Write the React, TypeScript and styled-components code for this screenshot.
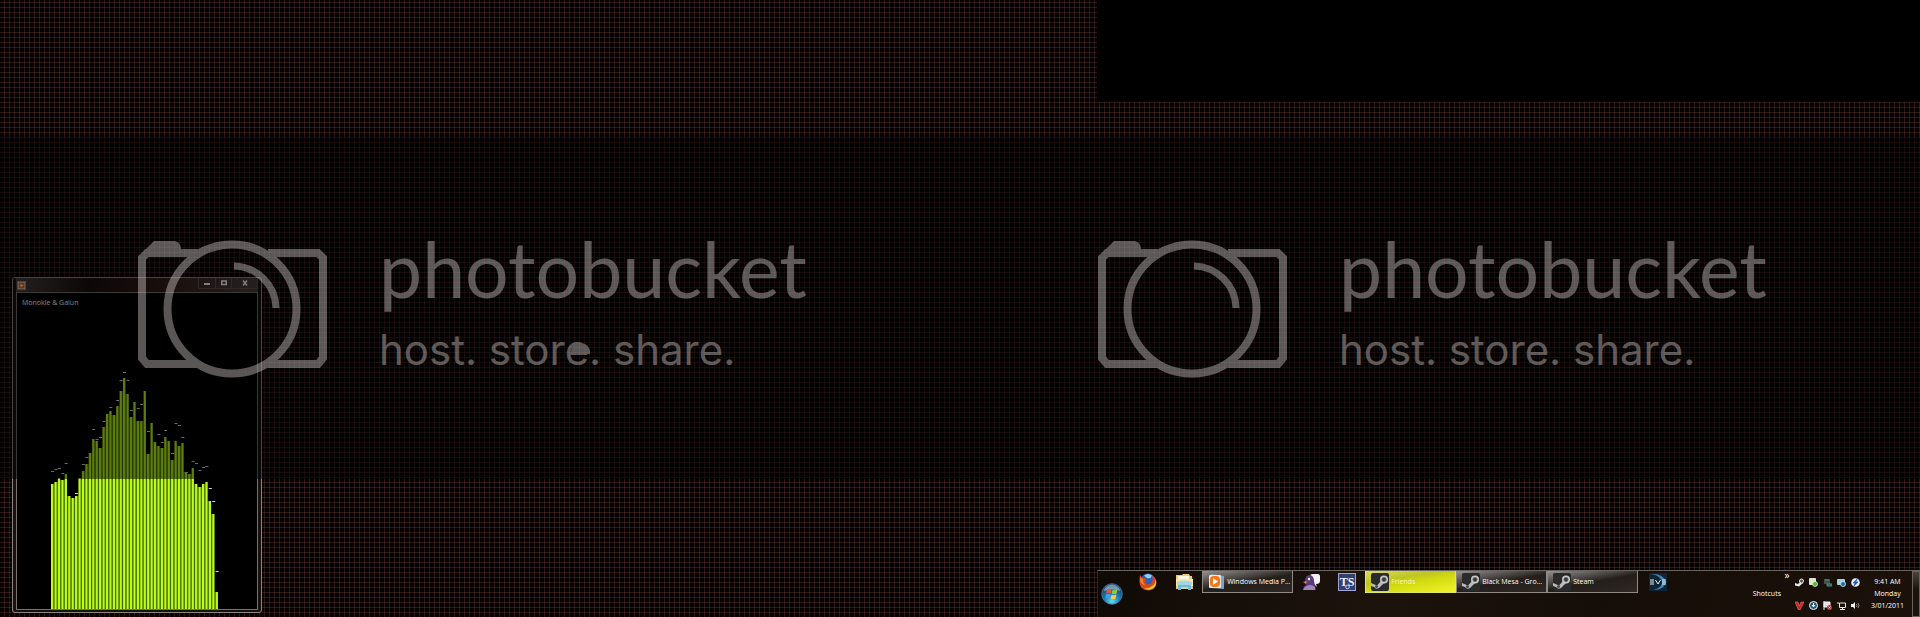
import React from 'react';
import styled, { createGlobalStyle, css } from 'styled-components';

const GlobalStyle = createGlobalStyle`
  * { box-sizing: border-box; }
  body { margin: 0; background: #050202; }
  button { font: inherit; color: inherit; background: none; border: 0; padding: 0; margin: 0; }
  svg { display: block; flex: none; }
`;

const Desktop = styled.main`
  position: relative;
  display: grid;
  grid-template-columns: 4fr 3fr;
  min-height: 100vh;
  overflow: hidden;
  font-family: 'Open Sans', 'Noto Sans', sans-serif;
  font-size: 7px;
  font-weight: 500;
  line-height: 12px;
  color: #fff;
  background-color: #070202;
  background-image:
    repeating-linear-gradient(90deg, transparent 0 4px, rgba(142, 84, 70, 0.27) 4px 5px),
    repeating-linear-gradient(0deg, transparent 0 4px, rgba(142, 84, 70, 0.27) 4px 5px);
`;

const Monitor = styled.section`
  position: relative;
  display: flex;
  flex-direction: column;
  justify-content: space-between;
  min-width: 0;
`;

const BlankStrip = styled.div`
  height: 102px;
  background: #000;
`;

/* Visualiser window */

const PlayerWindow = styled.article`
  position: absolute;
  left: 12px;
  bottom: 4px;
  width: 250px;
  height: 336px;
  display: flex;
  flex-direction: column;
  padding: 0 3px 2px;
  border: 1px solid #8d8480;
  border-radius: 3px;
  background: #171110;
`;

const TitleBar = styled.header`
  display: flex;
  justify-content: space-between;
  height: 14px;
  padding-left: 1px;
  background: linear-gradient(90deg, #48403d, #1a100f 30%, #341c19 60%, #4a403d);
`;

const TitleIcon = styled.svg`
  margin-top: 3px;
`;

const WindowButtons = styled.div`
  display: flex;
  height: 11px;
  border: 1px solid #5d5350;
  border-top: 0;
  border-radius: 0 0 2px 2px;
`;

const WindowButton = styled.button<{ $wide?: boolean }>`
  display: flex;
  align-items: center;
  justify-content: center;
  width: ${(p) => (p.$wide ? 26 : 16)}px;
  & + & { border-left: 1px solid #5d5350; }
`;

const Stage = styled.div`
  flex: 1;
  display: flex;
  flex-direction: column;
  justify-content: space-between;
  border: 1px solid #77706c;
  background: #000;
`;

const TrackName = styled.p`
  margin: 0;
  padding: 4px 5px;
`;

const Chart = styled.svg`
  margin-left: 34px;
`;

/* Watermark band */

const Band = styled.div`
  position: absolute;
  left: 0;
  right: 0;
  top: 137px;
  height: 342px;
  display: flex;
  align-items: center;
  padding-left: 138px;
  background: rgba(0, 0, 0, 0.5);
  pointer-events: none;
`;

const Mark = styled.div`
  position: relative;
  flex: none;
  display: flex;
  align-items: center;
  gap: 52px;
  width: 50vw;
  color: #f6efec;
  opacity: 0.36;
`;

const MarkText = styled.div`
  padding-bottom: 20px;
  white-space: nowrap;
`;

const Brand = styled.div`
  font: 400 77px/94px Lato, sans-serif;
`;

const Slogan = styled.div`
  margin-top: 10px;
  font: 400 42px/50px Inter, sans-serif;
`;

const Blot = styled.span`
  position: absolute;
  left: 433px;
  top: 122px;
  width: 19px;
  height: 11px;
  border-radius: 9px 9px 1px 1px;
  background: currentColor;
`;

/* Taskbar */

const Taskbar = styled.nav`
  display: flex;
  height: 47px;
  border-top: 1px solid #6a625d;
  border-left: 1px solid #2c241e;
  background: linear-gradient(100deg, #100a06, #1c130c 35%, #150d08 60%, #1b110a);
`;

const StartButton = styled.button`
  display: flex;
  align-items: center;
  justify-content: center;
  width: 32px;
  height: 46px;
  padding-right: 4px;
`;

const Launcher = styled.button<{ $roomy?: boolean }>`
  display: flex;
  align-items: center;
  justify-content: center;
  width: ${(p) => (p.$roomy ? 40 : 36)}px;
  height: 22px;
`;

const Task = styled.button<{ $alert?: boolean }>`
  display: flex;
  align-items: center;
  gap: 2px;
  width: 91px;
  height: 22px;
  padding-left: 5px;
  border: 1px solid #8f8a86;
  border-top: 0;
  white-space: nowrap;
  overflow: hidden;
  background: linear-gradient(170deg, #96928f 0%, #55504d 30%, #241e1a 52%, #2f2824 100%);
  ${(p) =>
    p.$alert &&
    css`
      color: #f8fac0;
      border-color: #e2e66a;
      background: linear-gradient(170deg, #d9dc5e 0%, #bfc522 35%, #d3da10 55%, #f0f52a 100%);
    `}
`;

const Tray = styled.div`
  display: flex;
  margin-left: auto;
`;

const Toolbar = styled.button`
  padding-bottom: 1px;
`;

const Chevron = styled.button`
  align-self: flex-start;
  width: 12px;
  height: 9px;
  font-size: 10px;
  line-height: 7px;
`;

const TrayIcons = styled.div`
  display: grid;
  grid-template-columns: repeat(5, 14px);
  grid-template-rows: 23px 23px;
  align-items: center;
  justify-items: center;
`;

const Clock = styled.time`
  width: 49px;
  padding-top: 5px;
  text-align: center;
  span { display: block; }
`;

const ShowDesktop = styled.button`
  width: 8px;
  border: 1px solid #6b625c;
  background: linear-gradient(#4a423d, #1a120d 40%);
`;

const levels = [
  125, 127, 131, 129, 135, 113, 111, 113, 131, 138, 145, 156, 170, 168, 161, 182, 195, 198, 194, 203, 218, 231, 215,
  192, 207, 188, 188, 218, 155, 186, 167, 163, 161, 172, 168, 149, 168, 163, 166, 137, 135, 141, 125, 122, 125, 127,
  108, 95, 17,
];

const peaks: Record<number, number> = {
  0: 138, 1: 140, 2: 141, 3: 136, 4: 146, 7: 116, 9: 145, 10: 152, 12: 180, 13: 170, 14: 172, 15: 188, 17: 202,
  19: 209, 20: 229, 21: 237, 22: 229, 23: 199, 25: 201, 26: 205, 28: 178, 31: 175, 32: 167, 33: 179, 35: 156,
  36: 186, 37: 184, 38: 172, 39: 137, 41: 148, 42: 146, 43: 139, 44: 142, 45: 143, 46: 121, 47: 108, 48: 38,
};

const STEP = 3.43;

function Spectrum() {
  return (
    <Chart width="169" height="240" role="img" aria-label="Audio spectrum">
      {levels.map((level, i) => {
        const x = i * STEP;
        const shared = Math.min(level, levels[i + 1] ?? 0);
        return (
          <g key={i}>
            <rect x={x + 2.2} y={240 - shared} width="1.3" height={shared} fill="#3c6c00" />
            <rect x={x} y={240 - level} width="2.3" height={level} fill="#bdfa1c" />
            {peaks[i] && <rect x={x} y={240 - peaks[i]} width="3" height="1" fill="#d8d8d8" />}
          </g>
        );
      })}
    </Chart>
  );
}

function Camera() {
  return (
    <svg width="189" height="140" viewBox="0 -2 189 140" fill="none" stroke="currentColor" strokeWidth="8">
      <path d="M60 13H9L4 18V118L9 124H60M130 13H180L185 18V118L180 124H130" />
      <path d="M8 9L16 1H37Q43 3 43 9V17H8Z" fill="currentColor" stroke="none" />
      <circle cx="94" cy="69" r="64.500" />
      <path d="M96 26A43 43 0 0 1 138 68" strokeWidth="7" />
    </svg>
  );
}

function Watermark({ blot }: { blot?: boolean }) {
  return (
    <Mark>
      <Camera />
      <MarkText>
        <Brand>photobucket</Brand>
        <Slogan>host. store. share.</Slogan>
      </MarkText>
      {blot && <Blot />}
    </Mark>
  );
}

function SteamIcon() {
  return (
    <svg width="18" height="18" viewBox="0 0 18 18">
      <rect width="18" height="18" rx="2" fill="#2b2a2a" />
      <path d="M0 10L6 12.500L10 8L14 9L8 15Q5 17 3 14L0 13Z" fill="#b9b9b9" />
      <circle cx="13" cy="6.500" r="4" fill="#c9c9c9" />
      <circle cx="13" cy="6.500" r="2.200" fill="#3a3939" stroke="#777" strokeWidth=".6" />
      <circle cx="5.500" cy="13.500" r="1.500" fill="#4a4949" />
    </svg>
  );
}

function StartOrb() {
  return (
    <svg width="22" height="22" viewBox="0 0 22 22">
      <defs>
        <radialGradient id="orb" cx=".5" cy=".85" r=".8">
          <stop offset="0" stopColor="#5fe0f5" />
          <stop offset=".45" stopColor="#1f7db8" />
          <stop offset="1" stopColor="#123b66" />
        </radialGradient>
      </defs>
      <circle cx="11" cy="11" r="10.300" fill="url(#orb)" stroke="#4f7c99" strokeWidth=".8" />
      <path d="M2.500 8Q5 1.500 11 1.500T19.500 8Q11 5 2.500 8Z" fill="#b9d6e6" opacity=".55" />
      <path d="M6 6.500Q8.500 5 10.500 6.300L9.700 10.300Q7.500 9.200 5.200 10.300Z" fill="#f0562a" />
      <path d="M11.500 6.700Q14 7.800 16.500 6.600L15.600 10.600Q13 11.700 10.700 10.600Z" fill="#8ecb3c" />
      <path d="M5 11.300Q7.300 10.300 9.500 11.400L8.600 15.300Q6.500 14.200 4.200 15.300Z" fill="#3fa0ec" />
      <path d="M10.500 11.700Q13 12.800 15.400 11.600L14.500 15.600Q12 16.700 9.700 15.600Z" fill="#fbd136" />
    </svg>
  );
}

function FirefoxIcon() {
  return (
    <svg width="18" height="18" viewBox="0 0 18 18">
      <circle cx="9" cy="8" r="7.500" fill="#2a62b8" />
      <path d="M5 2.500Q9 -.5 13 2.500Q12 6 8 5Z" fill="#8fd0f5" />
      <path d="M1 2L3.500 5Q6 4.500 7.500 6L6 8.500Q7 12 10.500 11.500Q14 10 13.500 6L13.500 2.500Q18 6 17.500 10.500Q16 17.500 9 17.500Q1 17 .5 9Q.3 5 1 2Z" fill="#d9481a" />
      <path d="M13 13Q17 11 16.500 6Q18.500 12 14 15.500Q9 18 5 15Q10 16 13 13Z" fill="#fbc63a" />
      <path d="M1 5Q1 11 6 12.500Q3 8.500 4 6Z" fill="#f08a22" />
    </svg>
  );
}

function ExplorerIcon() {
  return (
    <svg width="19" height="18" viewBox="0 0 19 18">
      <path d="M1 2H7L8 1H14L15 3H17L18 16H1Z" fill="#e9cf7c" />
      <path d="M3 3H14V6H3Z" fill="#fbf7e2" />
      <path d="M1 6H18V13H1Z" fill="#f6e7a6" />
      <path d="M2 9Q9 6 17 9V12H2Z" fill="#9fd7e8" />
      <path d="M3 12H16V17H13V14H6V17H3Z" fill="#6fb9dc" />
    </svg>
  );
}

function MediaIcon() {
  return (
    <svg width="17" height="16" viewBox="0 0 17 16">
      <path d="M3 0L16 2V15L3 14Z" fill="#6fa9cc" />
      <rect x="1" y="1" width="12" height="13" rx="1" fill="#eee6df" />
      <rect x="2" y="2" width="10" height="11" rx="4" fill="#f07818" />
      <path d="M5 4L10 7.500L5 11Z" fill="#fff" />
    </svg>
  );
}

function PidginIcon() {
  return (
    <svg width="19" height="18" viewBox="0 0 19 18">
      <path d="M8 3Q8 1 11 1H16Q18 1 18 4V8Q18 11 14 11L15 14L11 10Z" fill="#f5f3f7" />
      <path d="M3 8Q3 2 8 2Q12 3 12 8L14 17H1Q1 13 4 12Z" fill="#5b3b7e" />
      <path d="M3 14Q8 10 13 14V17H1Z" fill="#a086bd" />
      <circle cx="7" cy="6" r="1.200" fill="#fff" />
      <path d="M1 9L5 8L4 11Z" fill="#e2823a" />
    </svg>
  );
}

function TeamSpeakIcon() {
  return (
    <svg width="18" height="18" viewBox="0 0 18 18">
      <rect x=".5" y=".5" width="17" height="17" fill="#36406f" stroke="#9ba4d4" />
      <text x="9" y="13" textAnchor="middle" fontFamily="Liberation Serif, serif" fontWeight="700" fontSize="12" fill="#f0f1fa">TS</text>
      <circle cx="9.500" cy="14" r="1.800" fill="none" stroke="#c5cbee" />
    </svg>
  );
}

function EveIcon() {
  return (
    <svg width="18" height="18" viewBox="0 0 18 18">
      <rect width="18" height="18" fill="#0f2435" />
      <path d="M2 1Q14 0 17 9Q15 17 5 17Q14 14 13 8Q10 2 2 1Z" fill="#3f83b3" />
      <path d="M1 7H5M1 9H5M1 11H5M6.500 7L9 11L11.500 7M13 7H17M13 9H17M13 11H17" stroke="#e6f1f6" fill="none" />
    </svg>
  );
}

const trayIcons: { name: string; art: React.ReactNode }[] = [
  {
    name: 'Steam',
    art: <><path d="M0 5L3 6L5 4L8 5L4 8.500L0 7.500Z" fill="#e6e6e6" /><circle cx="6.500" cy="3" r="2" fill="#555" stroke="#e6e6e6" /></>,
  },
  { name: 'Messenger', art: <><rect width="7" height="7" rx="1" y="0" fill="#dfe6cf" /><circle cx="6" cy="6" r="2.500" fill="#5db63a" stroke="#e8f5dc" strokeWidth=".7" /></> },
  { name: 'Monitor', art: <><rect width="6" height="5" x="1" y="1" fill="#42504c" /><path d="M2 2H6M4 6H9V8H4Z" stroke="#4f8f84" fill="#27534c" /></> },
  { name: 'Network drive', art: <><rect y="1" width="8" height="6" rx="1" fill="#9fd0de" /><circle cx="6" cy="6" r="2.500" fill="#1d6f9a" stroke="#d5eef5" strokeWidth=".8" /></> },
  { name: 'Power', art: <><circle cx="4.500" cy="4.500" r="4.300" fill="#dfe9f8" /><path d="M6 1L2 5H4L3 8L7 4H5Z" fill="#2257c4" stroke="#2257c4" strokeWidth=".6" /></> },
  { name: 'Antivirus', art: <path d="M0 1H3L4.500 5L6 1H9L5 9H3.500Z" fill="#c9271d" stroke="#ef8c7e" strokeWidth=".5" /> },
  { name: 'Updater', art: <><circle cx="4.500" cy="4.500" r="4" fill="#1e5875" stroke="#f0f4f6" /><path d="M4.500 2V6M3 4L4.500 6L6 4" stroke="#fff" fill="none" /></> },
  { name: 'Action Center', art: <><path d="M1 0V9M1 1H7V6H1Z" stroke="#eee" fill="#e2e2e2" /><circle cx="6.500" cy="6.500" r="2.500" fill="#d42b2b" /><path d="M5.500 5.500L7.500 7.500M7.500 5.500L5.500 7.500" stroke="#fff" strokeWidth=".7" /></> },
  { name: 'Network', art: <path d="M2.500 2H8.500V6.500H2.500ZM0 2H2M5.500 6.500V8.500M3 8.500H8" stroke="#e8e8e8" fill="none" /> },
  { name: 'Volume', art: <><path d="M0 3H2L4 1V8L2 6H0Z" fill="#f0f0f0" /><path d="M5.500 3Q6.500 4.500 5.500 6M7 2Q9 4.500 7 7" stroke="#bbb" strokeWidth=".7" fill="none" /></> },
];

export default function App() {
  return (
    <>
      <GlobalStyle />
      <Desktop>
        <Monitor>
          <PlayerWindow>
            <TitleBar>
              <TitleIcon width="9" height="9" viewBox="0 0 9 9">
                <rect width="9" height="9" fill="#6b93a8" />
                <rect x="1" y="1" width="7" height="7" fill="#e9dcd0" />
                <rect x="1.500" y="1.500" width="6" height="6" rx="1" fill="#d9681d" />
                <path d="M3.500 3L6.500 4.500L3.500 6Z" fill="#fff" />
              </TitleIcon>
              <WindowButtons>
                <WindowButton aria-label="Minimize">
                  <svg width="6" height="6"><path d="M0 4H6" stroke="#fff" strokeWidth="2" /></svg>
                </WindowButton>
                <WindowButton aria-label="Maximize">
                  <svg width="6" height="6"><path d="M.75 1H5.250V4.500H.75Z" fill="none" stroke="#fff" strokeWidth="1.500" /></svg>
                </WindowButton>
                <WindowButton $wide aria-label="Close">
                  <svg width="6" height="6"><path d="M1 .5L5 5.500M5 .5L1 5.500" stroke="#fff" strokeWidth="1.500" /></svg>
                </WindowButton>
              </WindowButtons>
            </TitleBar>
            <Stage>
              <TrackName>Monokle &amp; Galun</TrackName>
              <Spectrum />
            </Stage>
          </PlayerWindow>
        </Monitor>
        <Monitor>
          <BlankStrip />
          <Taskbar>
            <StartButton aria-label="Start"><StartOrb /></StartButton>
            <Launcher aria-label="Firefox"><FirefoxIcon /></Launcher>
            <Launcher aria-label="Explorer"><ExplorerIcon /></Launcher>
            <Task><MediaIcon />Windows Media P...</Task>
            <Launcher aria-label="Pidgin"><PidginIcon /></Launcher>
            <Launcher aria-label="TeamSpeak"><TeamSpeakIcon /></Launcher>
            <Task $alert><SteamIcon />Friends</Task>
            <Task><SteamIcon />Black Mesa - Gro...</Task>
            <Task><SteamIcon />Steam</Task>
            <Launcher $roomy aria-label="EVE"><EveIcon /></Launcher>
            <Tray>
              <Toolbar>Shotcuts</Toolbar>
              <Chevron aria-label="More shortcuts">»</Chevron>
              <TrayIcons>
                {trayIcons.map((icon) => (
                  <button key={icon.name} aria-label={icon.name}>
                    <svg width="9" height="9" viewBox="0 0 9 9">{icon.art}</svg>
                  </button>
                ))}
              </TrayIcons>
              <Clock>
                <span>9:41 AM</span>
                <span>Monday</span>
                <span>3/01/2011</span>
              </Clock>
              <ShowDesktop aria-label="Show desktop" />
            </Tray>
          </Taskbar>
        </Monitor>
        <Band>
          <Watermark blot />
          <Watermark />
        </Band>
      </Desktop>
    </>
  );
}
